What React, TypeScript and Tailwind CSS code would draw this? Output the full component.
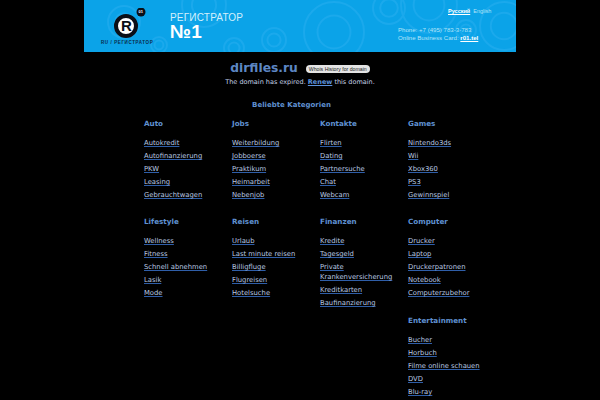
import React from 'react';

const FONT = "font-['DejaVu_Sans',sans-serif]";

type Category = { title: string; links: string[] };

const ROWS: Category[][] = [
  [
    { title: 'Auto', links: ['Autokredit', 'Autofinanzierung', 'PKW', 'Leasing', 'Gebrauchtwagen'] },
    { title: 'Jobs', links: ['Weiterbildung', 'Jobboerse', 'Praktikum', 'Heimarbeit', 'Nebenjob'] },
    { title: 'Kontakte', links: ['Flirten', 'Dating', 'Partnersuche', 'Chat', 'Webcam'] },
    { title: 'Games', links: ['Nintendo3ds', 'Wii', 'Xbox360', 'PS3', 'Gewinnspiel'] },
  ],
  [
    { title: 'Lifestyle', links: ['Wellness', 'Fitness', 'Schnell abnehmen', 'Lasik', 'Mode'] },
    { title: 'Reisen', links: ['Urlaub', 'Last minute reisen', 'Billigfluge', 'Flugreisen', 'Hotelsuche'] },
    { title: 'Finanzen', links: ['Kredite', 'Tagesgeld', 'Private Krankenversicherung', 'Kreditkarten', 'Baufinanzierung'] },
    { title: 'Computer', links: ['Drucker', 'Laptop', 'Druckerpatronen', 'Notebook', 'Computerzubehor'] },
  ],
];

const ENTERTAINMENT: Category = {
  title: 'Entertainment',
  links: ['Bucher', 'Horbuch', 'Filme online schauen', 'DVD', 'Blu-ray'],
};

function BannerPattern() {
  const rings = [
    [40, 22, 16], [120, 5, 22], [190, 40, 12], [250, 32, 30], [305, 8, 16], [345, 5, 28],
    [382, 30, 10], [420, 26, 24], [150, 48, 10], [75, 45, 8],
  ];
  return (
    <svg className="absolute inset-0" width="432" height="52" viewBox="0 0 432 52" fill="none">
      {rings.map(([cx, cy, r]) => (
        <g key={`${cx}-${cy}`} stroke="#1ba9ec" strokeWidth="2">
          <circle cx={cx} cy={cy} r={r} />
          <circle cx={cx} cy={cy} r={r * 0.55} />
        </g>
      ))}
    </svg>
  );
}

function Logo() {
  return (
    <div className="relative w-[54px] h-[40px] shrink-0">
      <svg width="54" height="34" viewBox="0 0 54 34">
        <circle cx="26" cy="18" r="10" fill="#fff" stroke="#0a0f18" strokeWidth="4" />
        <circle cx="41" cy="4" r="4.5" fill="#0a0f18" />
      </svg>
      <span className="absolute left-[21px] top-[8px] font-['Liberation_Sans',sans-serif] font-bold text-[15px] leading-[20px] text-[#0a0f18]">R</span>
      <span className="absolute left-[38.5px] top-[1px] font-['Liberation_Sans',sans-serif] font-bold text-[4px] leading-[6px] text-white">01</span>
      <span className="absolute left-[1px] top-[32px] whitespace-nowrap font-['Liberation_Sans',sans-serif] font-bold text-[4.5px] leading-[6px] tracking-[0.6px] text-[#0a2a48]">RU / РЕГИСТРАТОР</span>
    </div>
  );
}

function Banner() {
  return (
    <div className="relative mx-auto w-[432px] h-[52px] bg-[#0ba3e8] overflow-hidden">
      <BannerPattern />
      <div className="relative flex h-full">
        <div className="ml-[16px] mt-[8px]">
          <Logo />
        </div>
        <div className="ml-[16px] mt-[12px] font-['Liberation_Sans',sans-serif] text-white">
          <div className="text-[10px] leading-[11px] font-light text-[#d5f0fc] tracking-[0.2px]">РЕГИСТРАТОР</div>
          <div className="text-[19px] leading-[17px] font-bold">№1</div>
        </div>
        <div className="ml-auto w-[118px] font-['Liberation_Sans',sans-serif] text-[#b4e4f9]">
          <div className="flex gap-[3px] mt-[8px] text-[5.5px] leading-[7px] ml-[50px]">
            <span className="font-bold text-white underline">Русский</span>
            <span>English</span>
          </div>
          <div className="mt-[11px] text-[6.1px] leading-[8px]">Phone: +7 (495) 783-3-783</div>
          <div className="text-[6.1px] leading-[8px] whitespace-nowrap">
            Online Business Card: <span className="font-bold text-white underline">r01.tel</span>
          </div>
        </div>
      </div>
    </div>
  );
}

function CategoryBlock({ category }: { category: Category }) {
  return (
    <div>
      <div className="text-[7.2px] leading-[10px] font-bold text-[#5f90d0]">{category.title}</div>
      <ul className="mt-[9px] flex flex-col">
        {category.links.map((link) => (
          <li key={link} className="text-[6.8px] leading-[10px] mb-[3px] pr-[2px] text-[#b9c9e2]">
            <a className="underline decoration-[#2f5ea8]">{link}</a>
          </li>
        ))}
      </ul>
    </div>
  );
}

export default function App() {
  return (
    <div className={`w-[600px] h-[400px] bg-black overflow-hidden ${FONT}`}>
      <Banner />

      <div className="mt-[9px] flex items-center justify-center gap-[8px]">
        <span className="text-[12.3px] leading-[15px] font-bold text-[#5d87c4]">dirfiles.ru</span>
        <span className="rounded-full bg-[#e4e4e4] px-[3px] font-['Liberation_Sans',sans-serif] text-[5.2px] leading-[8px] text-[#222]">Whois History for domain</span>
      </div>
      <div className="mt-[1px] text-center text-[6.5px] leading-[11px] text-[#c4d0e4]">
        The domain has expired. <span className="font-bold text-[#5d93dd] underline">Renew</span> this domain.
      </div>

      <div className="mt-[12px] pr-[17px] text-center text-[7px] leading-[10px] font-bold text-[#5f90d0]">Beliebte Kategorien</div>

      <div className="ml-[144px] mt-[9px] w-[352px] grid grid-cols-[88px_88px_88px_88px]">
        {ROWS[0].map((category) => (
          <CategoryBlock key={category.title} category={category} />
        ))}
        <div className="col-span-4 h-[14px]" />
        {ROWS[1].map((category) => (
          <CategoryBlock key={category.title} category={category} />
        ))}
        <div className="col-start-4 mt-[5px]">
          <CategoryBlock category={ENTERTAINMENT} />
        </div>
      </div>
    </div>
  );
}
